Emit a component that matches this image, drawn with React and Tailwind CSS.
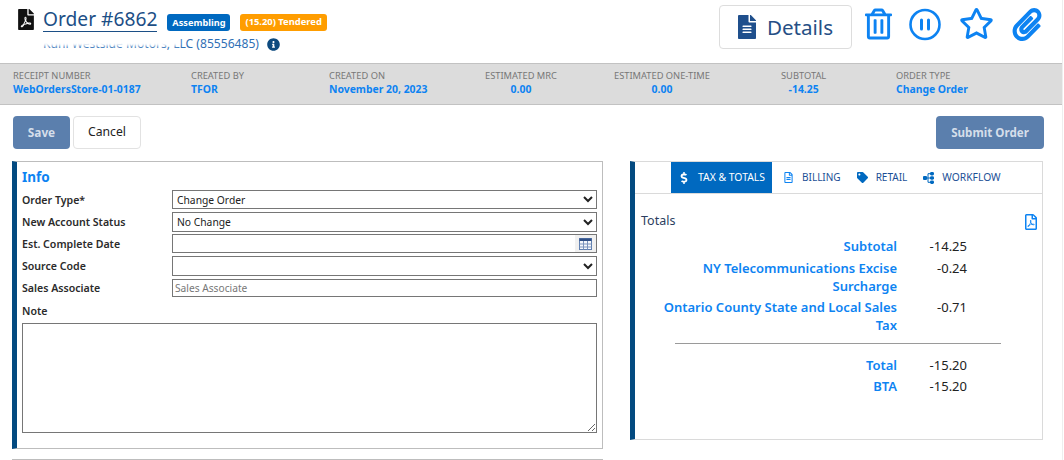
import React from 'react';
import {
  FaFilePdf, FaFileAlt, FaRegTrashAlt, FaRegStar, FaPaperclip,
  FaInfoCircle, FaDollarSign, FaRegFileAlt, FaTag, FaRegFilePdf,
} from 'react-icons/fa';

const stats = [
  { label: 'RECEIPT NUMBER', value: 'WebOrdersStore-01-0187', w: 'w-[178px]' },
  { label: 'CREATED BY', value: 'TFOR', w: 'w-[138px]' },
  { label: 'CREATED ON', value: 'November 20, 2023', w: 'w-[156px]' },
  { label: 'ESTIMATED MRC', value: '0.00', w: 'w-[129px]', center: true },
  { label: 'ESTIMATED ONE-TIME', value: '0.00', w: 'w-[167px]', center: true },
  { label: 'SUBTOTAL', value: '-14.25', w: 'w-[115px]', center: true },
  { label: 'ORDER TYPE', value: 'Change Order', w: 'w-[120px]' },
];

const PauseIcon = () => (
  <svg width="32" height="33" viewBox="0 0 32 33" fill="none" stroke="#0d83f2" className="ml-[17px] mt-[3px]">
    <circle cx="16" cy="16.5" r="14.5" strokeWidth="2.6" />
    <path d="M12.5 12v9M19.5 12v9" strokeWidth="3" strokeLinecap="round" />
  </svg>
);

const WorkflowIcon = () => (
  <svg width="11" height="12" viewBox="0 0 11 12" fill="#0069c0">
    <rect x="0" y="4" width="4" height="4" rx="1" />
    <rect x="7" y="0" width="4" height="3.4" rx="1.4" />
    <rect x="7" y="4.3" width="4" height="3.4" rx="1.4" />
    <rect x="7" y="8.6" width="4" height="3.4" rx="1.4" />
    <path d="M3 6h5M5 6V1.7h3M5 6v4.3h3" stroke="#0069c0" strokeWidth="1" fill="none" />
  </svg>
);

const CalendarIcon = () => (
  <svg width="13" height="12" viewBox="0 0 13 12">
    <rect x="0.5" y="0.5" width="12" height="11" fill="#f4f7fb" stroke="#5f7fb0" />
    <rect x="0.5" y="0.5" width="12" height="2.5" fill="#2f4f86" />
    <path d="M0.5 6h12M0.5 9h12M4.5 3v8.5M8.5 3v8.5" stroke="#7a93bd" strokeWidth="1" />
  </svg>
);

const FormRow = ({ label, children, className }) => (
  <div className={`flex items-center ${className}`}>
    <label className="w-[150px] pt-[2px] text-[10.6px] font-semibold text-[#2b2b2b]">{label}</label>
    <div className="w-[425px] h-full">{children}</div>
  </div>
);

const selectCls = 'block w-full h-full border border-[#767676] bg-white text-[10.3px] text-[#222] rounded-none';

const TotalRow = ({ label, value, className = '' }) => (
  <div className={`flex leading-[18px] ${className}`}>
    <div className="w-[262px] text-right text-[13px] font-semibold text-[#0d83f2]">{label}</div>
    <div className="w-[70px] text-right text-[13px] text-[#222]">{value}</div>
  </div>
);

export default function App() {
  return (
    <div className="w-[1063px] h-[460px] overflow-hidden bg-white border-r border-[#eeeeee] font-['Noto_Sans','Open_Sans',sans-serif]">
      {/* header */}
      <div className="h-[63px] flex pl-[18px] pr-[20px]">
        <FaFilePdf className="w-[16px] h-[21px] mt-[9px] text-[#111]" />
        <div className="ml-[9px] pt-[6px]">
          <div className="flex items-start">
            <span className="text-[19.2px] leading-[25px] text-[#1c4f86] border-b border-[#1c4f86]">Order #6862</span>
            <span className="ml-[10px] mt-[8px] h-[17px] px-[5px] flex items-center rounded-[3px] bg-[#0069c0] text-white text-[9.2px] font-bold">Assembling</span>
            <span className="ml-[10px] mt-[8px] h-[17px] px-[5px] flex items-center rounded-[3px] bg-[#ff9d00] text-white text-[9.4px] font-bold">(15.20) Tendered</span>
          </div>
          <div className="relative flex items-center mt-[3px] h-[18px] text-[12.1px] text-[#2f6fb5]">
            <span>Kuhl Westside Motors, LLC (85556485)</span>
            <FaInfoCircle className="ml-[8px] w-[13px] h-[13px] text-[#0d4a7f]" />
            <div className="absolute left-[-6px] top-0 w-[143px] h-[11px] bg-white blur-[1.5px]" />
          </div>
        </div>
        <div className="ml-auto flex items-start pt-[5px]">
          <button className="w-[133px] h-[44px] flex items-center justify-center gap-[11px] rounded-[4px] border border-[#dddddd] bg-white text-[20.6px] text-[#264f85]">
            <FaFileAlt className="w-[18px] h-[24px] text-[#1f4f8c]" />
            <span>Details</span>
          </button>
          <FaRegTrashAlt className="ml-[13px] mt-[3px] w-[27px] h-[32px] text-[#0d83f2]" />
          <PauseIcon />
          <FaRegStar className="ml-[18px] mt-[2px] w-[35px] h-[33px] text-[#0d83f2]" />
          <FaPaperclip className="ml-[18px] mt-[3px] w-[30px] h-[33px] text-[#0d83f2]" />
        </div>
      </div>

      {/* summary band */}
      <div className="h-[42px] w-[1062px] flex items-center pl-[13px] pb-[2px] bg-[#dcdcdc] border-y border-[#c2c2c2]">
        {stats.map((s) => (
          <div key={s.label} className={s.w}>
            <div className={s.center ? 'w-fit text-center' : 'w-fit'}>
              <div className="text-[9.3px] leading-[12px] text-[#777]">{s.label}</div>
              <div className="text-[10.4px] leading-[14px] font-bold text-[#0d83f2]">{s.value}</div>
            </div>
          </div>
        ))}
      </div>

      {/* actions */}
      <div className="flex pt-[11px] pl-[13px] pr-[18px]">
        <button className="w-[57px] h-[33px] rounded-[4px] bg-[#5b7fad] text-[#d5deea] text-[11.8px] font-bold">Save</button>
        <button className="ml-[3px] w-[68px] h-[33px] rounded-[4px] border border-[#e2e2e2] bg-white text-[#222] text-[12.2px]">Cancel</button>
        <button className="ml-auto w-[108px] h-[33px] rounded-[4px] bg-[#5b7fad] text-[#d5deea] text-[11.6px] font-bold">Submit Order</button>
      </div>

      <div className="flex items-start pt-[12px] pl-[12px]">
        {/* info panel */}
        <div className="w-[591px]">
          <div className="h-[288px] border-l-[5px] border-l-[#034a80] border-y border-r border-[#bdbdbd] pl-[5px]">
            <h2 className="text-[13.5px] leading-[18px] mt-[6px] font-bold text-[#0d83f2]">Info</h2>
            <FormRow label="Order Type*" className="mt-[4px] h-[19px]">
              <select className={selectCls}><option>Change Order</option></select>
            </FormRow>
            <FormRow label="New Account Status" className="mt-[3px] h-[20px]">
              <select className={selectCls}><option>No Change</option></select>
            </FormRow>
            <FormRow label="Est. Complete Date" className="mt-[2px] h-[19px]">
              <div className="h-full flex justify-end border border-[#767676]">
                <div className="w-[21px] flex items-center justify-center bg-[#f0f0f0]"><CalendarIcon /></div>
              </div>
            </FormRow>
            <FormRow label="Source Code" className="mt-[3px] h-[20px]">
              <select className={selectCls}><option></option></select>
            </FormRow>
            <FormRow label="Sales Associate" className="mt-[3px] h-[18px]">
              <input placeholder="Sales Associate" className="block w-full h-full border border-[#767676] px-[2px] text-[10.2px] placeholder:text-[#777]" />
            </FormRow>
            <div className="mt-[6px] text-[10.6px] leading-[16px] font-semibold text-[#2b2b2b]">Note</div>
            <textarea className="block mt-[4px] w-[575px] h-[110px] border border-[#767676]" />
          </div>
          <div className="mt-[10px] h-px bg-[#bdbdbd]" />
        </div>

        {/* totals panel */}
        <div className="ml-[27px] w-[413px] h-[279px] border-l-[5px] border-l-[#034a80] border-y border-r border-y-[#dadada] border-r-[#dadada]">
          <div className="h-[32px] flex items-stretch border-b border-[#dadada] pl-[36px] text-[10px] text-[#1c4f96]">
            <div className="w-[101px] flex items-center bg-[#0069c0] text-white text-[10.4px] pl-[9px]">
              <FaDollarSign className="w-[8px] h-[12px]" />
              <span className="ml-[10px]">TAX &amp; TOTALS</span>
            </div>
            <div className="flex items-center ml-[12px]">
              <FaRegFileAlt className="w-[9px] h-[11px] text-[#0d83f2]" />
              <span className="ml-[9px]">BILLING</span>
            </div>
            <div className="flex items-center ml-[16px]">
              <FaTag className="w-[11px] h-[11px] text-[#0069c0]" />
              <span className="ml-[8px]">RETAIL</span>
            </div>
            <div className="flex items-center ml-[16px]">
              <WorkflowIcon />
              <span className="ml-[8px] text-[10.3px]">WORKFLOW</span>
            </div>
          </div>
          <div className="flex justify-between pt-[18px] pl-[6px] pr-[5px]">
            <span className="text-[12.5px] leading-[18px] text-[#2c3e60]">Totals</span>
            <FaRegFilePdf className="mt-[2px] w-[12px] h-[16px] text-[#0d83f2]" />
          </div>
          <TotalRow label="Subtotal" value="-14.25" className="mt-[7px]" />
          <TotalRow label={<>NY Telecommunications Excise<br />Surcharge</>} value="-0.24" className="mt-[4px]" />
          <TotalRow label={<>Ontario County State and Local Sales<br />Tax</>} value="-0.71" className="mt-[3px]" />
          <div className="ml-[40px] mt-[9px] w-[326px] h-px bg-[#9a9a9a]" />
          <TotalRow label="Total" value="-15.20" className="mt-[12px]" />
          <TotalRow label="BTA" value="-15.20" className="mt-[3px]" />
        </div>
      </div>
    </div>
  );
}
